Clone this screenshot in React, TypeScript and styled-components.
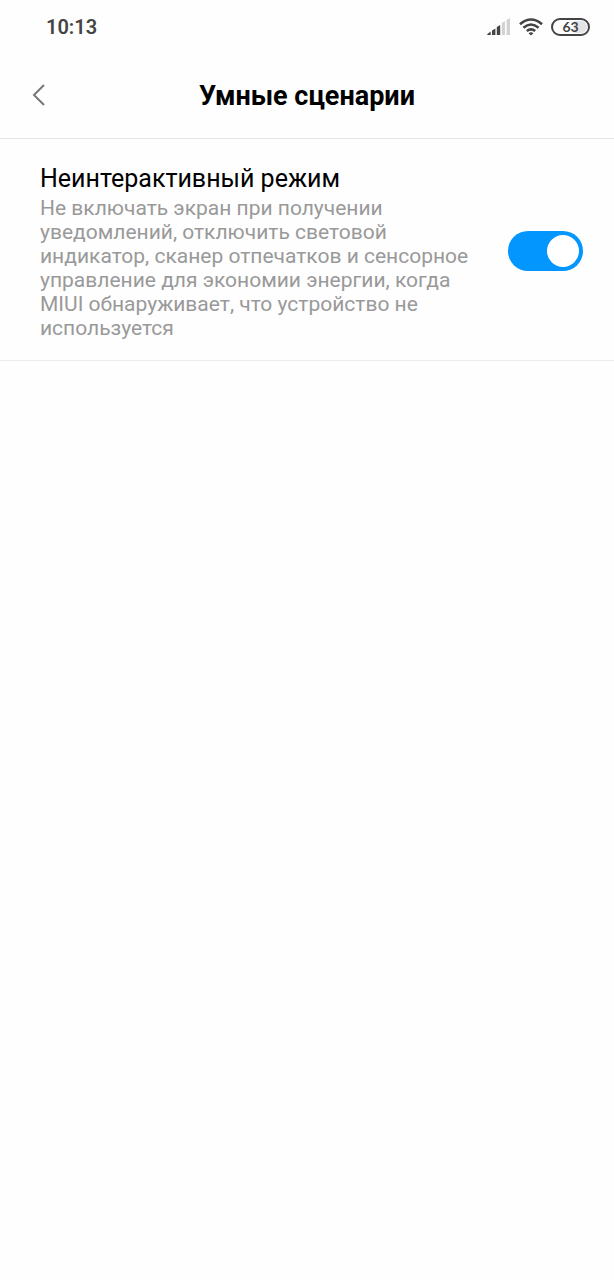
import React, { useState } from 'react';
import styled, { createGlobalStyle } from 'styled-components';

const GlobalStyle = createGlobalStyle`
  *, *::before, *::after { box-sizing: border-box; }
  body {
    margin: 0;
    background: #fefefe;
    color: #000;
    font-family: Roboto, "Noto Sans", sans-serif;
  }
`;

const Screen = styled.div`
  min-height: 100vh;
`;

const StatusBar = styled.div`
  display: flex;
  align-items: center;
  justify-content: space-between;
  height: 52px;
  padding: 2px 24px 0 46px;
  color: #444;
`;

const Clock = styled.time`
  font-size: 20px;
  line-height: 24px;
  font-weight: 600;
`;

const StatusIcons = styled.div`
  display: flex;
  align-items: center;
  gap: 8px;
`;

const Battery = styled.div`
  display: flex;
  align-items: center;
  justify-content: center;
  width: 39px;
  height: 18px;
  padding: 1px;
  border: 2px solid #444;
  border-radius: 9px;
  background: linear-gradient(to right, #fefefe 62%, #e4e4e4 62%) content-box;
  font-family: Lato, Roboto, sans-serif;
  font-size: 14px;
  line-height: 12px;
  font-weight: 700;
`;

const Header = styled.header`
  display: grid;
  grid-template-columns: 48px 1fr 48px;
  align-items: center;
  height: 87px;
  padding: 0 15px;
  border-bottom: 1px solid #e6e6e6;
`;

const BackButton = styled.button`
  display: flex;
  align-items: center;
  justify-content: center;
  width: 48px;
  height: 48px;
  padding: 0;
  border: 0;
  background: none;
  color: #777;
  cursor: pointer;
`;

const PageTitle = styled.h1`
  margin: 0;
  padding-top: 2px;
  font-size: 27px;
  line-height: 32px;
  font-weight: 700;
  text-align: center;
`;

const SettingRow = styled.label`
  display: flex;
  align-items: center;
  justify-content: space-between;
  gap: 30px;
  padding: 22px 31px 20px 40px;
  border-bottom: 1px solid #ebebeb;
  cursor: pointer;
`;

const SettingText = styled.span`
  display: flex;
  flex-direction: column;
`;

const SettingName = styled.span`
  font-size: 25px;
  line-height: 35px;
`;

const SettingNote = styled.span`
  color: #999;
  font-size: 21px;
  line-height: 24px;
`;

const Switch = styled.input`
  appearance: none;
  flex: none;
  display: flex;
  align-items: center;
  justify-content: flex-start;
  width: 75px;
  height: 40px;
  margin: 0;
  padding: 0 4px;
  border-radius: 20px;
  background: #ccc;
  cursor: pointer;

  &::before {
    content: '';
    width: 32px;
    height: 32px;
    border-radius: 50%;
    background: #fff;
  }

  &:checked {
    justify-content: flex-end;
    background: #0496ff;
  }
`;

function SignalIcon() {
  return (
    <svg width="24" height="18" viewBox="0 0 24 18" aria-hidden="true">
      <g fill="#444">
        <path d="M0.3 17V16L3.7 13.6V17Z" />
        <path d="M5 12.4L8.4 10.4V17H5Z" />
        <path d="M9.8 9L13.2 7V17H9.8Z" />
      </g>
      <g fill="#d2d2d2">
        <path d="M14.8 5L18 3V17H14.8Z" />
        <path d="M19.6 2L23 0V17H19.6Z" />
      </g>
    </svg>
  );
}

function WifiIcon() {
  return (
    <svg width="24" height="18" viewBox="0 0 24 18" fill="none" stroke="#444" strokeWidth="2.6" aria-hidden="true">
      <path d="M1 6.2Q12 -3.2 23 6.2" />
      <path d="M4.4 9.7Q12 3.3 19.6 9.7" />
      <path d="M7.8 13Q12 9.6 16.2 13" />
      <path d="M12 17.6L9.6 15.2Q12 13.4 14.4 15.2Z" fill="#444" stroke="none" />
    </svg>
  );
}

export default function App() {
  const [idleMode, setIdleMode] = useState(true);

  return (
    <>
      <GlobalStyle />
      <Screen>
        <StatusBar>
          <Clock>10:13</Clock>
          <StatusIcons>
            <SignalIcon />
            <WifiIcon />
            <Battery>63</Battery>
          </StatusIcons>
        </StatusBar>
        <Header>
          <BackButton type="button" aria-label="Назад">
            <svg width="14" height="22" viewBox="0 0 14 22" fill="none" stroke="currentColor" strokeWidth="2">
              <path d="M12 1L2 11L12 21" />
            </svg>
          </BackButton>
          <PageTitle>Умные сценарии</PageTitle>
        </Header>
        <main>
          <SettingRow>
            <SettingText>
              <SettingName>Неинтерактивный режим</SettingName>
              <SettingNote>
                Не включать экран при получении уведомлений, отключить световой индикатор, сканер отпечатков и
                сенсорное управление для экономии энергии, когда MIUI обнаруживает, что устройство не используется
              </SettingNote>
            </SettingText>
            <Switch
              type="checkbox"
              role="switch"
              checked={idleMode}
              onChange={(event) => setIdleMode(event.target.checked)}
            />
          </SettingRow>
        </main>
      </Screen>
    </>
  );
}
